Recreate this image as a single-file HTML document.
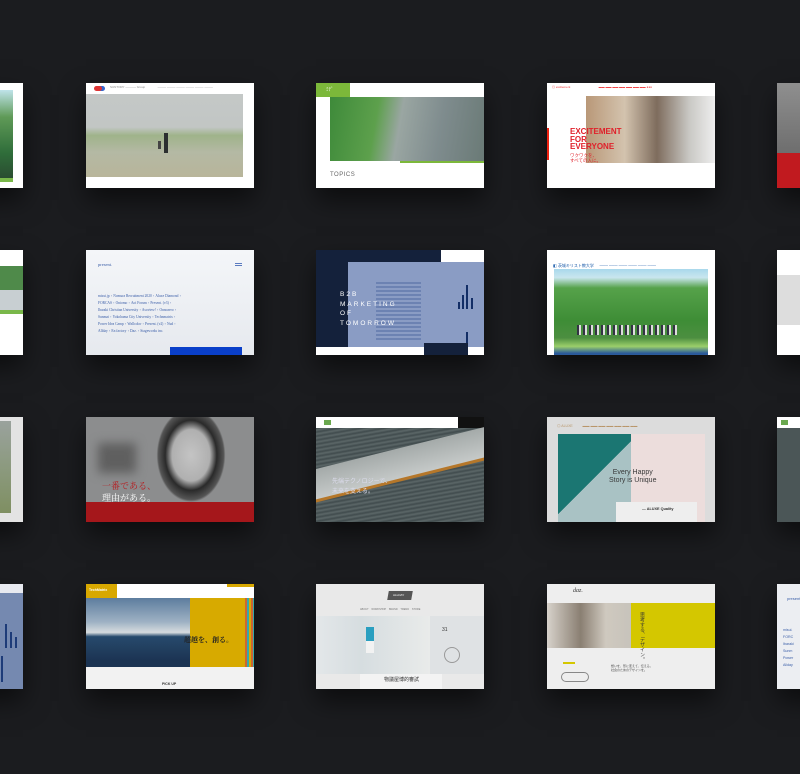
<!DOCTYPE html>
<html><head><meta charset="utf-8"><style>
*{margin:0;padding:0;box-sizing:border-box}
body{width:800px;height:774px;background:#1b1c1f;overflow:hidden;position:relative;font-family:"Liberation Sans","Noto Sans CJK JP",sans-serif}
.c{position:absolute;width:168px;height:105px;overflow:hidden;box-shadow:0 12px 24px rgba(0,0,0,.55)}
.a{position:absolute}
.t{position:absolute;white-space:nowrap}
</style></head><body>

<div class="c" style="left:-145px;top:83px;background:#fff">
 <div class="a" style="left:140px;top:7px;width:18px;height:90px;background:linear-gradient(#bfe3ea 0,#5f9a57 30%,#2f6d3a 70%,#2a4a30)"></div>
 <div class="a" style="left:140px;top:95px;width:18px;height:4px;background:#7ab84a"></div>
</div>
<div class="c" style="left:-145px;top:250px;background:#fff">
 <div class="a" style="left:140px;top:16px;width:28px;height:24px;background:#4f8a4a"></div>
 <div class="a" style="left:140px;top:40px;width:28px;height:20px;background:#c8cfd2"></div>
 <div class="a" style="left:140px;top:60px;width:28px;height:4px;background:#7ab84a"></div>
</div>
<div class="c" style="left:-145px;top:417px;background:#e3e3e3">
 <div class="a" style="left:140px;top:4px;width:16px;height:92px;background:linear-gradient(#9aa29d,#8c9a7f 50%,#7f8f62)"></div>
</div>
<div class="c" style="left:-145px;top:584px;background:#7589b0">
 <div class="a" style="left:140px;top:0;width:28px;height:9px;background:#e8eaf0"></div>
 <div class="a" style="left:150px;top:40px;width:2px;height:24px;background:#1d3b78"></div>
 <div class="a" style="left:155px;top:48px;width:2px;height:16px;background:#1d3b78"></div>
 <div class="a" style="left:160px;top:53px;width:2px;height:11px;background:#1d3b78"></div>
 <div class="a" style="left:146px;top:72px;width:2px;height:26px;background:#1d3b78"></div>
</div>

<div class="c" style="left:86px;top:83px;background:#fff">
 <div class="a" style="left:8px;top:3px;width:8px;height:5px;border-radius:3px;background:#d33;box-shadow:3px 0 0 #36c"></div>
 <div class="t" style="left:24px;top:2px;font-size:3px;color:#888">SUNTORY ───── Group &nbsp;&nbsp;&nbsp;&nbsp;&nbsp;&nbsp;&nbsp;&nbsp;&nbsp;&nbsp;&nbsp;&nbsp;&nbsp; ──── ──── ──── ──── ──── ────</div>
 <div class="a" style="left:0;top:11px;width:157px;height:83px;background:linear-gradient(#c4c8c7 0,#c2c6c4 40%,#9fb38a 50%,#b4b9a4 70%,#b8b59a)"></div>
 <div class="a" style="left:78px;top:50px;width:4px;height:20px;background:#2b2f30"></div>
 <div class="a" style="left:72px;top:58px;width:3px;height:8px;background:#444"></div>
</div>
<div class="c" style="left:316px;top:83px;background:#fff">
 <div class="a" style="left:0;top:0;width:34px;height:14px;background:#7cb83a"></div>
 <div class="t" style="left:10px;top:3px;font-size:5px;color:#fff">ﾐﾃﾞ</div>
 <div class="a" style="left:14px;top:14px;width:154px;height:64px;background:linear-gradient(100deg,#3e8a3a 0,#5da04c 30%,#9aa6a2 45%,#7f8c8e 70%,#6a7a76)"></div>
 <div class="a" style="left:84px;top:78px;width:84px;height:2px;background:#7cb83a"></div>
 <div class="t" style="left:14px;top:89px;font-size:6px;color:#666;letter-spacing:.5px">TOPICS</div>
</div>
<div class="c" style="left:547px;top:83px;background:#fff">
 <div class="t" style="left:5px;top:2px;font-size:3px;color:#e33">◎ excitement &nbsp;&nbsp;&nbsp;&nbsp;&nbsp;&nbsp;&nbsp;&nbsp;&nbsp;&nbsp;&nbsp;&nbsp;&nbsp;&nbsp;&nbsp;&nbsp;&nbsp;&nbsp;&nbsp;&nbsp;&nbsp;&nbsp;&nbsp;&nbsp;&nbsp;&nbsp;&nbsp;&nbsp;&nbsp;&nbsp;&nbsp;&nbsp; ▬▬ ▬▬ ▬▬ ▬▬ ▬▬ ▬▬ ▬▬ ●●●</div>
 <div class="a" style="left:39px;top:13px;width:129px;height:67px;background:linear-gradient(90deg,#b99878 0,#d3c3ae 30%,#7e6c5d 55%,#c9c8c4 80%,#eee)"></div>
 <div class="a" style="left:0;top:45px;width:2px;height:32px;background:#e21"></div>
 <div class="t" style="left:23px;top:45px;font-size:8px;line-height:7.5px;font-weight:bold;color:#e0202a">EXCITEMENT<br>FOR<br>EVERYONE</div>
 <div class="t" style="left:23px;top:70px;font-size:4.5px;line-height:5px;color:#e0202a">ワクワクを、<br>すべての人に。</div>
</div>
<div class="c" style="left:777px;top:83px;background:#888">
 <div class="a" style="left:0;top:0;width:30px;height:70px;background:linear-gradient(#8f8f8f,#6e6e6e)"></div>
 <div class="a" style="left:0;top:70px;width:30px;height:35px;background:#c11a1f"></div>
</div>

<div class="c" style="left:86px;top:250px;background:linear-gradient(#f4f6f9,#e6e9ee)">
 <div class="t" style="left:12px;top:12px;font-size:4.5px;color:#3a5ea8;font-family:'Liberation Serif',serif">present.</div>
 <div class="a" style="left:149px;top:13px;width:7px;height:3px;border-top:1px solid #5b7bc0;border-bottom:1px solid #5b7bc0"></div>
 <div class="t" style="left:12px;top:43px;font-size:3.6px;line-height:7px;color:#3a5ea8;font-family:'Liberation Serif',serif">misui.jp・Nomura Recruitment 2020・Aluxe Diamond・<br>FORCAS・Oniomo・Aoi Forum・Present. (v3)・<br>Ibaraki Christian University・Asoview!・Onnozero・<br>Sunmai・Yokohama City University・Technmatrix・<br>Power Idea Camp・Wallcolor・Present. (v2)・Nud・<br>Allday・En factory・Daz.・Stageworks inc.</div>
 <div class="a" style="left:84px;top:97px;width:72px;height:8px;background:#0a3fc9"></div>
</div>
<div class="c" style="left:316px;top:250px;background:#14213b">
 <div class="a" style="left:32px;top:12px;width:136px;height:85px;background:#8a9cc4"></div>
 <div class="a" style="left:125px;top:0;width:43px;height:12px;background:#fff"></div>
 <div class="a" style="left:60px;top:30px;width:45px;height:60px;background:repeating-linear-gradient(#8a9cc4 0,#8a9cc4 2px,#6c82b2 2px,#6c82b2 4px)"></div>
 <div class="a" style="left:146px;top:45px;width:2px;height:14px;background:#132e66"></div>
 <div class="a" style="left:150px;top:35px;width:2px;height:24px;background:#132e66"></div>
 <div class="a" style="left:155px;top:48px;width:2px;height:11px;background:#132e66"></div>
 <div class="a" style="left:142px;top:52px;width:2px;height:7px;background:#132e66"></div>
 <div class="a" style="left:150px;top:82px;width:2px;height:15px;background:#132e66"></div>
 <div class="t" style="left:24px;top:40px;font-size:6.5px;line-height:9.6px;letter-spacing:2px;color:#fff">B2B<br>MARKETING<br>OF<br>TOMORROW</div>
 <div class="a" style="left:0;top:97px;width:168px;height:8px;background:#fff"></div>
 <div class="a" style="left:108px;top:93px;width:44px;height:12px;background:#14213b"></div>
</div>
<div class="c" style="left:547px;top:250px;background:#fff">
 <div class="t" style="left:6px;top:13px;font-size:4px;color:#1a5aa8">◧ 茨城キリスト教大学 &nbsp;&nbsp;&nbsp; ─── ─── ─── ─── ─── ───</div>
 <div class="a" style="left:7px;top:19px;width:154px;height:86px;background:linear-gradient(#a9d8ec 0,#c9e6ee 10%,#56a24a 22%,#3e8d36 60%,#4c8e40 80%,#9bcf6a 90%,#2b5a9a 98%)"></div>
 <div class="a" style="left:30px;top:75px;width:100px;height:10px;background:repeating-linear-gradient(90deg,#334 0,#334 2px,#ddd 2px,#ddd 4px,transparent 4px,transparent 6px)"></div>
</div>
<div class="c" style="left:777px;top:250px;background:#fff">
 <div class="a" style="left:0;top:25px;width:30px;height:50px;background:#ddd"></div>
</div>

<div class="c" style="left:86px;top:417px;background:#8c8d8e">
 <div class="a" style="left:62px;top:0;width:86px;height:85px;background:radial-gradient(ellipse 40% 55% at 50% 45%,#c4c4c4 0,#b0b0b0 55%,#2a2a2a 75%,#555 95%,#8c8d8e 100%)"></div>
 <div class="a" style="left:12px;top:26px;width:38px;height:30px;background:#5f5f5f;filter:blur(5px)"></div>
 <div class="t" style="left:16px;top:62px;font-size:9px;color:#b7191c;font-family:'Liberation Serif','Noto Serif CJK SC',serif">一番である、</div>
 <div class="t" style="left:16px;top:74px;font-size:9px;color:#fff;font-family:'Liberation Serif','Noto Serif CJK SC',serif">理由がある。</div>
 <div class="a" style="left:0;top:85px;width:168px;height:20px;background:#a5171b"></div>
</div>
<div class="c" style="left:316px;top:417px;background:#4b5657">
 <div class="a" style="left:0;top:0;width:142px;height:11px;background:#fff"></div>
 <div class="a" style="left:142px;top:0;width:26px;height:11px;background:#111"></div>
 <div class="a" style="left:8px;top:3px;width:7px;height:5px;background:#6aa84f"></div>
 <div class="a" style="left:0;top:11px;width:168px;height:94px;background:repeating-linear-gradient(170deg,#3f4a4c 0,#5c6768 2px,#414c4e 4px)"></div>
 <div class="a" style="left:-10px;top:30px;width:200px;height:30px;background:linear-gradient(#a4aaa9,#c6cac9);transform:rotate(-14deg)"></div>
 <div class="a" style="left:-10px;top:60px;width:200px;height:3px;background:#b5772a;transform:rotate(-14deg)"></div>
 <div class="t" style="left:16px;top:60px;font-size:6px;line-height:10px;color:#dde">先端テクノロジーで、<br>未来を支える。</div>
</div>
<div class="c" style="left:547px;top:417px;background:#dcdcdc">
 <div class="t" style="left:10px;top:7px;font-size:3.5px;color:#b9966a">◎ ALUXE &nbsp;&nbsp;&nbsp;&nbsp;&nbsp;&nbsp;&nbsp;&nbsp; ▬▬ ▬▬ ▬▬ ▬▬ ▬▬ ▬▬ ▬▬</div>
 <div class="a" style="left:84px;top:17px;width:74px;height:88px;background:#ecdddc"></div>
 <div class="a" style="left:11px;top:17px;width:73px;height:88px;background:linear-gradient(135deg,#1b7672 50%,#a9c2c4 50%)"></div>
 <div class="t" style="left:62px;top:52px;font-size:7px;line-height:8px;color:#3a3a3a;text-align:center">Every Happy<br>Story is Unique</div>
 <div class="a" style="left:69px;top:85px;width:81px;height:20px;background:#eee"></div>
 <div class="t" style="left:95px;top:90px;font-size:3.8px;color:#333;font-weight:bold">— ALUXE Quality</div>
</div>
<div class="c" style="left:777px;top:417px;background:#4b5657">
 <div class="a" style="left:0;top:0;width:30px;height:11px;background:#fff"></div>
 <div class="a" style="left:4px;top:3px;width:7px;height:5px;background:#6aa84f"></div>
</div>

<div class="c" style="left:86px;top:584px;background:#fff">
 <div class="a" style="left:0;top:0;width:31px;height:14px;background:#d8a800"></div>
 <div class="t" style="left:3px;top:4px;font-size:3.5px;color:#fff;font-weight:bold">TechMatrix</div>
 <div class="a" style="left:141px;top:0;width:27px;height:3px;background:#d8a800"></div>
 <div class="a" style="left:0;top:14px;width:104px;height:69px;background:linear-gradient(#5d7d9e 0,#9fb2c4 35%,#d7dcdf 50%,#274a6c 56%,#1c3453 90%)"></div>
 <div class="a" style="left:104px;top:14px;width:55px;height:69px;background:#d7aa00"></div>
 <div class="a" style="left:159px;top:14px;width:9px;height:69px;background:repeating-linear-gradient(90deg,#c63 0,#c63 2px,#3aa 2px,#3aa 4px,#d7aa00 4px,#d7aa00 6px)"></div>
 <div class="t" style="left:98px;top:51px;font-size:7px;font-weight:bold;color:#222;font-family:'Liberation Serif','Noto Serif CJK SC',serif">超越を、創る。</div>
 <div class="a" style="left:0;top:83px;width:168px;height:22px;background:#f2f2f2"></div>
 <div class="t" style="left:76px;top:98px;font-size:3.5px;font-weight:bold;color:#333">PICK UP</div>
</div>
<div class="c" style="left:316px;top:584px;background:#e9e9e9">
 <div class="a" style="left:72px;top:7px;width:24px;height:9px;background:#555;transform:skewX(-10deg)"></div>
 <div class="t" style="left:77px;top:9px;font-size:3px;color:#fff">ALLDAY</div>
 <div class="t" style="left:44px;top:24px;font-size:2.5px;color:#777">ABOUT &nbsp;&nbsp; WORKSHOP &nbsp;&nbsp; BRAND &nbsp;&nbsp; TREND &nbsp;&nbsp; STORE</div>
 <div class="a" style="left:0;top:32px;width:114px;height:58px;background:linear-gradient(90deg,#e3e7e9,#d6dde0 40%,#e9ebea)"></div>
 <div class="a" style="left:50px;top:43px;width:8px;height:14px;background:#2a9fc0"></div>
 <div class="a" style="left:50px;top:57px;width:8px;height:12px;background:#f2f2f2"></div>
 <div class="a" style="left:114px;top:32px;width:54px;height:58px;background:#dfe2e4"></div>
 <div class="a" style="left:128px;top:63px;width:16px;height:16px;border-radius:50%;border:1px solid #999"></div>
 <div class="t" style="left:126px;top:43px;font-size:5px;color:#333">31</div>
 <div class="a" style="left:44px;top:90px;width:82px;height:15px;background:#f3f3f3"></div>
 <div class="t" style="left:68px;top:92px;font-size:5px;color:#333">物議屋博的審試</div>
</div>
<div class="c" style="left:547px;top:584px;background:#eee">
 <div class="t" style="left:26px;top:4px;font-size:6px;font-style:italic;color:#333;font-family:'Liberation Serif',serif">daz.</div>
 <div class="a" style="left:0;top:19px;width:84px;height:45px;background:linear-gradient(90deg,#d7d2cb,#8a7f72 40%,#cfc9bf 70%,#c7c3bb)"></div>
 <div class="a" style="left:84px;top:19px;width:84px;height:45px;background:#d4c700"></div>
 <div class="t" style="left:92px;top:28px;font-size:5px;line-height:6px;color:#333;writing-mode:vertical-rl;height:30px">思考する、デザイン。</div>
 <div class="a" style="left:16px;top:78px;width:12px;height:2px;background:#d4c700"></div>
 <div class="a" style="left:14px;top:88px;width:28px;height:10px;border:1px solid #888;border-radius:6px"></div>
 <div class="t" style="left:64px;top:80px;font-size:3px;line-height:4px;color:#444">想いを、形に変えて、伝える。<br>社会のためのデザインを。</div>
</div>
<div class="c" style="left:777px;top:584px;background:#eceef2">
 <div class="t" style="left:10px;top:12px;font-size:4px;color:#3a5ea8">present.</div>
 <div class="t" style="left:6px;top:43px;font-size:3.6px;line-height:7px;color:#3a5ea8">misui.<br>FORC<br>Ibaraki<br>Sunm<br>Power<br>Allday</div>
</div>
</body></html>
